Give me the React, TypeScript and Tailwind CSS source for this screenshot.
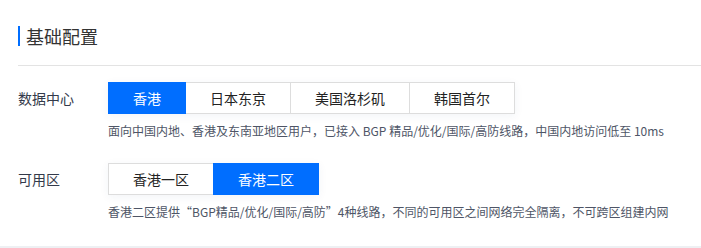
import { useState } from "react";

const REGIONS = ["香港", "日本东京", "美国洛杉矶", "韩国首尔"];
const ZONES = ["香港一区", "香港二区"];

function Segmented({
  options,
  value,
  onChange,
}: {
  options: string[];
  value: string;
  onChange: (v: string) => void;
}) {
  return (
    <div className="flex w-fit shadow-[0_2px_10px_rgba(40,60,120,0.06)]">
      {options.map((opt, i) => {
        const active = opt === value;
        return (
          <button
            key={opt}
            onClick={() => onChange(opt)}
            className={`h-[32px] px-[24px] text-[14px] leading-[30px] border ${
              i > 0 ? "-ml-px" : ""
            } ${
              active
                ? "bg-[#006eff] border-[#006eff] text-white relative z-10"
                : "bg-white border-[#dddddd] text-[#222222]"
            }`}
          >
            {opt}
          </button>
        );
      })}
    </div>
  );
}

export default function App() {
  const [region, setRegion] = useState("香港");
  const [zone, setZone] = useState("香港二区");

  return (
    <div
      className="h-[248px] bg-[#eef0f3] overflow-hidden"
      style={{ fontFamily: '"Noto Sans CJK SC", "Noto Sans", sans-serif' }}
    >
      <div className="h-[246px] bg-white pl-[18px] pt-[26px]">
        <div className="h-[20px] border-l-2 border-[#006eff] pl-[6px] flex items-center">
          <h2 className="text-[18px] leading-[20px] text-[#333333]">基础配置</h2>
        </div>
        <div className="mt-[19px] h-px bg-[#e3e3e3]" />

        <div className="mt-[16px] flex">
          <div className="w-[90px] h-[32px] flex items-center text-[14px] text-[#333a4a]">
            数据中心
          </div>
          <div>
            <Segmented options={REGIONS} value={region} onChange={setRegion} />
            <p className="mt-[8px] text-[12px] leading-[18px] text-[#4e5566]">
              面向中国内地、香港及东南亚地区用户，已接入 BGP 精品/优化/国际/高防线路，中国内地访问低至 10ms
            </p>
          </div>
        </div>

        <div className="mt-[23px] flex">
          <div className="w-[90px] h-[32px] flex items-center text-[14px] text-[#333a4a]">
            可用区
          </div>
          <div>
            <Segmented options={ZONES} value={zone} onChange={setZone} />
            <p className="mt-[8px] text-[12px] leading-[18px] text-[#4e5566]">
              香港二区提供“BGP精品/优化/国际/高防”4种线路，不同的可用区之间网络完全隔离，不可跨区组建内网
            </p>
          </div>
        </div>
      </div>
    </div>
  );
}
